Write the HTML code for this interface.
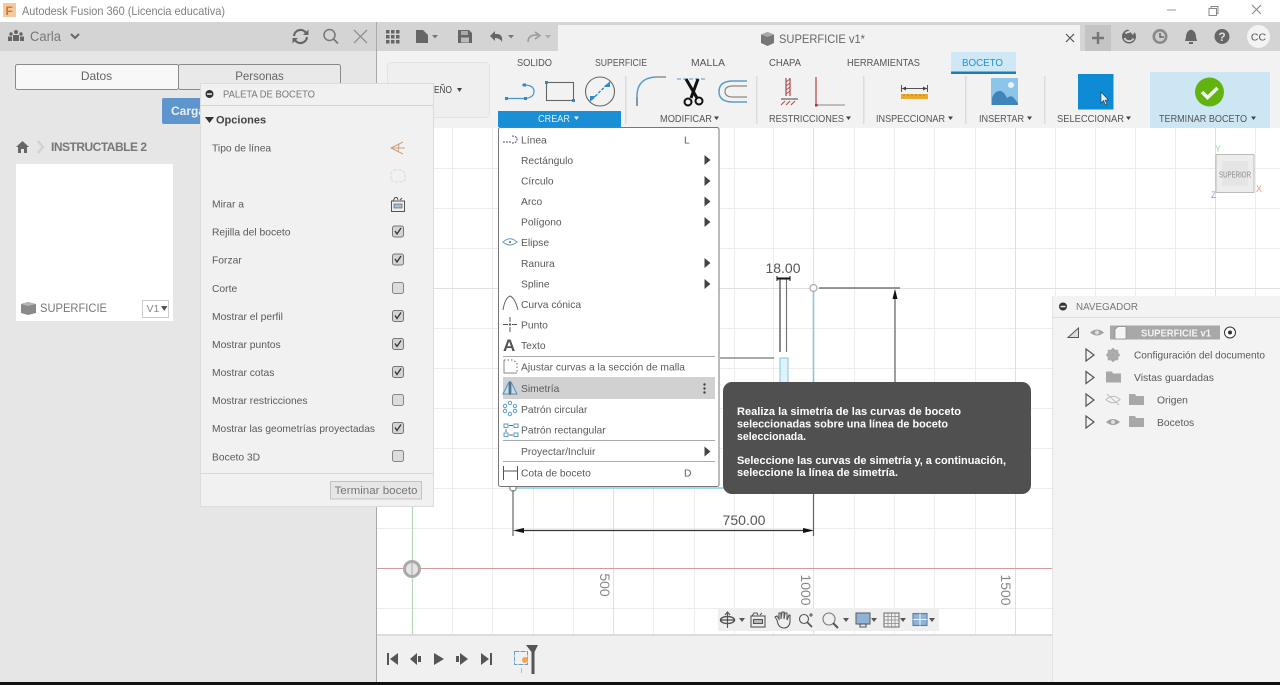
<!DOCTYPE html>
<html lang="es"><head><meta charset="utf-8"><title>Autodesk Fusion 360</title>
<style>
html,body{margin:0;padding:0;width:1280px;height:685px;overflow:hidden;background:#f3f3f3}
svg{display:block;position:absolute;left:0;top:0;filter:blur(.3px)}
text{font-family:"Liberation Sans",sans-serif;font-size:10.5px;fill:#5a5a5a}
.rb{font-size:10.5px;fill:#555}
.m{font-size:10.3px;fill:#5a5a5a}
.p{font-size:10.3px;fill:#5a5a5a}
.tt{font-size:11px;font-weight:bold;fill:#fff}
.g{stroke:#ededed;stroke-width:1}
.G{stroke:#e0e0e0;stroke-width:1}
</style></head><body>
<svg width="1280" height="685" viewBox="0 0 1280 685" xmlns="http://www.w3.org/2000/svg">
<defs>
<g id="chk"><rect x="-5.5" y="-5.5" width="11" height="11" rx="2" fill="#d4d4d4" stroke="#777"/><path d="M-3-.5 -1 2.5 3-3.5" fill="none" stroke="#333" stroke-width="1.3"/></g>
<g id="unc"><rect x="-5.5" y="-5.5" width="11" height="11" rx="2" fill="#dcdcdc" stroke="#888"/></g>
<path id="ar" d="M0-5 6 0 0 5Z" fill="#444"/>
<g id="fold"><path d="M0 0H6L7 2H15V11H0Z" fill="#a8a8a8"/></g>
<g id="eye"><path d="M-7 0Q0-6 7 0 0 6-7 0Z" fill="#a2a2a2"/><circle r="2" fill="#ddd"/></g>
<path id="tri" d="M0 0 8 6 0 12Z" fill="none" stroke="#555" stroke-width="1.2"/>
</defs>

<!-- base -->
<rect width="1280" height="685" fill="#f3f3f3"/>
<rect width="1280" height="22" fill="#fff"/>
<rect y="22" width="1280" height="29" fill="#d4d4d4"/>

<!-- title bar -->
<rect x="3" y="3" width="13" height="14" fill="#f2c9a0"/>
<text x="5.500" y="15" style="font-size:12px;font-weight:bold;fill:#d9722b">F</text>
<text x="22" y="15" style="font-size:12px;fill:#808080" textLength="203" lengthAdjust="spacingAndGlyphs">Autodesk Fusion 360 (Licencia educativa)</text>
<path d="M1167 10H1176" stroke="#999"/>
<path d="M1209 8.500H1216.500V15.500H1209ZM1211 8.500V6.500H1218V13.500H1216.500" fill="none" stroke="#888"/>
<path d="M1252 5 1261 14M1261 5 1252 14" stroke="#888" stroke-width="1.1"/>

<!-- left panel -->
<rect y="51" width="376" height="634" fill="#e6e6e6"/>
<rect x="376" y="22" width="1" height="663" fill="#a9a9a9"/>
<g fill="#666"><circle cx="16" cy="32" r="2"/><circle cx="11" cy="34" r="1.700"/><circle cx="21" cy="34" r="1.700"/><rect x="13" y="35" width="6" height="6"/><rect x="8" y="36.500" width="4" height="4.500"/><rect x="20" y="36.500" width="4" height="4.500"/></g>
<text x="30" y="41" style="font-size:14px;fill:#777" textLength="31" lengthAdjust="spacingAndGlyphs">Carla</text>
<path d="M71 34 75 38 79 34" fill="none" stroke="#666" stroke-width="2"/>
<path d="M294 36A6.500 6.500 0 0 1 306 33M307 37A6.500 6.500 0 0 1 295 40" fill="none" stroke="#666" stroke-width="2.200"/><path d="M303 35H308.500V29.500ZM298 38H292.500V43.500Z" fill="#666"/>
<circle cx="329.500" cy="35" r="5.500" fill="none" stroke="#777" stroke-width="1.500"/><path d="M333.500 39 338 43.500" stroke="#777" stroke-width="1.700"/>
<path d="M354 30 367 43M367 30 354 43" stroke="#888" stroke-width="1.200"/>
<rect x="15.500" y="64.500" width="163" height="25" rx="2" fill="#f8f8f8" stroke="#8a8a8a"/>
<rect x="178.500" y="64.500" width="162" height="25" rx="2" fill="#e9e9e9" stroke="#8a8a8a"/>
<text x="96.500" y="80" text-anchor="middle" style="font-size:12px;fill:#666">Datos</text>
<text x="259.500" y="80" text-anchor="middle" style="font-size:11.500px;fill:#666">Personas</text>
<rect x="162" y="98" width="60" height="26" rx="2" fill="#5f95cd"/>
<text x="171" y="115" style="font-size:12px;font-weight:bold;fill:#e8f0f8">Cargar</text>
<path d="M22.500 141 16 147H18V153H21V149H24V153H27V147H29Z" fill="#666"/>
<path d="M38 141 43 147 38 153" fill="none" stroke="#d2d2d2" stroke-width="2.500"/>
<text x="51" y="151" style="font-size:12px;font-weight:bold;fill:#777" textLength="96" lengthAdjust="spacing">INSTRUCTABLE 2</text>
<rect x="16" y="164" width="157" height="157" fill="#fff"/>
<path d="M21 304 28 302 36 304V313L28 315 21 313Z" fill="#8a8a8a"/><path d="M21 304 28 306 36 304 28 302Z" fill="#b5b5b5"/>
<text x="40" y="312" style="font-size:12px;fill:#777" textLength="67" lengthAdjust="spacingAndGlyphs">SUPERFICIE</text>
<rect x="142.500" y="300.500" width="26" height="17" fill="#fff" stroke="#ccc"/>
<text x="146.500" y="312" style="font-size:10.500px;fill:#888">V1</text><path d="M161 306H167.500L164.200 311Z" fill="#555"/>

<!-- ribbon -->
<rect x="377" y="51" width="903" height="77" fill="#f2f2f2"/>
<rect x="558" y="25" width="522" height="26" fill="#f2f2f2"/>
<rect x="377" y="22" width="903" height="3" fill="#d4d4d4"/>
<g fill="#666"><rect x="386" y="30" width="3.500" height="3.500"/><rect x="391" y="30" width="3.500" height="3.500"/><rect x="396" y="30" width="3.500" height="3.500"/><rect x="386" y="35" width="3.500" height="3.500"/><rect x="391" y="35" width="3.500" height="3.500"/><rect x="396" y="35" width="3.500" height="3.500"/><rect x="386" y="40" width="3.500" height="3.500"/><rect x="391" y="40" width="3.500" height="3.500"/><rect x="396" y="40" width="3.500" height="3.500"/></g>
<path d="M416 30H423L428 35V43H416Z" fill="#666"/><path d="M432 35H438L435 38.500Z" fill="#777"/>
<path d="M458 30H469L472 33V43H458Z" fill="#666"/><rect x="461" y="31" width="7" height="4" fill="#aaa"/><rect x="461" y="37.500" width="8" height="5" fill="#bbb"/>
<path d="M490 36 495 31V34H498Q503 35 502 42Q500 38 495 38V41Z" fill="#666"/><path d="M508 35H514L511 38.500Z" fill="#777"/>
<path d="M528 42Q528 35 536 35H538M535 32 540 35.500 535 39" fill="none" stroke="#999" stroke-width="1.500"/><path d="M545 35H551L548 38.500Z" fill="#aaa"/>
<path d="M761 34.500 767.500 32 774 34.500V43L767.500 46 761 43Z" fill="#777"/><path d="M761 34.500 767.500 37 774 34.500 767.500 32Z" fill="#aaa"/>
<text x="779" y="43" style="font-size:12px;fill:#666" textLength="86" lengthAdjust="spacingAndGlyphs">SUPERFICIE v1*</text>
<path d="M1066 34 1074 42M1074 34 1066 42" stroke="#555" stroke-width="1.200"/>
<rect x="1085" y="25" width="26" height="26" fill="#c4c4c4"/>
<path d="M1098 32V44M1092 38H1104" stroke="#777" stroke-width="2.500"/>
<circle cx="1129" cy="36.500" r="7" fill="#666"/><path d="M1124.500 38A5 5 0 0 0 1133.500 38.500M1125.500 33.500A5 5 0 0 1 1130 32" fill="none" stroke="#d4d4d4" stroke-width="1.800"/><path d="M1128 29.500 1136 29.500 1133 35Z" fill="#d4d4d4"/>
<circle cx="1160" cy="36.500" r="7.500" fill="#888"/><circle cx="1160" cy="36.500" r="5" fill="#ccc"/><path d="M1160 33V37H1164" fill="none" stroke="#555" stroke-width="1.300"/>
<path d="M1191 29.500Q1186 31 1186 37L1185 41H1197L1196 37Q1196 31 1191 29.500Z" fill="#666"/><rect x="1189" y="42" width="4" height="2" fill="#666"/>
<circle cx="1222" cy="36.500" r="7.500" fill="#666"/><text x="1222" y="41" text-anchor="middle" style="font-size:12px;font-weight:bold;fill:#ddd">?</text>
<circle cx="1258.500" cy="36.500" r="11.500" fill="#f3f3f3"/><text x="1258.500" y="40.500" text-anchor="middle" style="font-size:10.500px;fill:#555">CC</text>

<!-- design box -->
<rect x="387.500" y="62.500" width="102" height="55" rx="4" fill="#efefef" stroke="#e2e2e2"/>
<text x="434" y="93" class="rb" style="fill:#444" textLength="18" lengthAdjust="spacingAndGlyphs">EÑO</text><path d="M457 88H462L459.500 92Z" fill="#444"/>

<!-- ribbon tabs -->
<text x="517" y="66" class="rb" textLength="35" lengthAdjust="spacingAndGlyphs">SOLIDO</text>
<text x="595" y="66" class="rb" textLength="52" lengthAdjust="spacingAndGlyphs">SUPERFICIE</text>
<text x="691" y="66" class="rb" textLength="34" lengthAdjust="spacingAndGlyphs">MALLA</text>
<text x="769" y="66" class="rb" textLength="32" lengthAdjust="spacingAndGlyphs">CHAPA</text>
<text x="847" y="66" class="rb" textLength="73" lengthAdjust="spacingAndGlyphs">HERRAMIENTAS</text>
<rect x="951" y="52" width="65" height="20" fill="#cfe8f5"/>
<rect x="951" y="71.500" width="65" height="2.500" fill="#1b7db3"/>
<text x="962" y="66" class="rb" style="fill:#2590cc" textLength="41" lengthAdjust="spacingAndGlyphs">BOCETO</text>

<!-- dividers -->
<g fill="#dcdcdc"><rect x="625" y="76" width="1.500" height="48"/><rect x="756" y="76" width="1.500" height="48"/><rect x="863" y="76" width="1.500" height="48"/><rect x="965" y="76" width="1.500" height="48"/><rect x="1044" y="76" width="1.500" height="48"/></g>

<!-- create icons -->
<path d="M506 98.500H524Q534 98 534 91.500T524 85H522" fill="none" stroke="#4c93c6" stroke-width="1.200"/>
<g fill="#2d8ccb"><rect x="505" y="97" width="3" height="3"/><rect x="524" y="97" width="3" height="3"/><rect x="523" y="83.500" width="3" height="3"/></g>
<rect x="546.500" y="82.500" width="27" height="18" fill="none" stroke="#666" stroke-width="1.100"/>
<g fill="#2d8ccb"><rect x="545" y="81" width="3" height="3"/><rect x="572" y="99" width="3" height="3"/></g>
<circle cx="600" cy="91.500" r="14.500" fill="none" stroke="#666" stroke-width="1.100"/>
<path d="M592 99.500 608 83.500" stroke="#2d8ccb" stroke-width="1.400" stroke-dasharray="3 1.500"/>
<path d="M590 102V96H596ZM610 81V87H604Z" fill="#2d8ccb"/>

<!-- modify icons -->
<path d="M637 106V96Q637 78 656 77" fill="none" stroke="#5a9cc9" stroke-width="1.500"/>
<path d="M656 77H666" stroke="#777" stroke-width="1.200"/><path d="M637 97V106" stroke="#777" stroke-width="1.200"/>
<path d="M677 79H706" stroke="#7aa9c9" stroke-width="1.200" stroke-dasharray="4 2"/>
<path d="M686 79 697 98M698 79 691 98" stroke="#111" stroke-width="3"/>
<circle cx="688" cy="102" r="3.500" fill="none" stroke="#111" stroke-width="2"/><circle cx="699" cy="101" r="3.500" fill="none" stroke="#111" stroke-width="2"/>
<path d="M747 81H733Q719 81 719 91.500T733 102H747" fill="none" stroke="#5a9cc9" stroke-width="1.500"/>
<path d="M747 86H733Q725 86 725 91.500T733 97H747" fill="none" stroke="#888" stroke-width="1.200"/>
<text x="660" y="122" class="rb" textLength="52" lengthAdjust="spacingAndGlyphs">MODIFICAR</text><path d="M714 116.500H719L716.500 120Z" fill="#444"/>

<!-- constraint icons -->
<path d="M786 78V96M790 78V96" stroke="#9e3a3a" stroke-width="1.100"/>
<path d="M786 82 790 79M786 86 790 83M786 90 790 87M786 94 790 91" stroke="#c45" stroke-width=".9"/>
<path d="M781 99H798" stroke="#666" stroke-width="1.300"/>
<path d="M781 105 785 101M786 105 790 101M791 105 795 101" stroke="#b44" stroke-width="1"/>
<path d="M816 77V104.500" stroke="#a33" stroke-width="1.100"/><path d="M817 105H845" stroke="#888"/><rect x="815" y="104" width="2.500" height="2.500" fill="#a33"/>
<text x="769" y="122" class="rb" textLength="75" lengthAdjust="spacingAndGlyphs">RESTRICCIONES</text><path d="M846 116.500H851L848.500 120Z" fill="#444"/>

<!-- inspect -->
<path d="M901.500 85V92M927.500 85V92M902 88.500H927" stroke="#555" stroke-width="1"/>
<path d="M902 88.500 906 86.500V90.500ZM927 88.500 923 86.500V90.500Z" fill="#444"/>
<rect x="901" y="94" width="27" height="5" fill="#eba92d"/>
<path d="M904 94.500V96M908 94.500V96M912 94.500V96M916 94.500V96M920 94.500V96M924 94.500V96" stroke="#8a6a20" stroke-width=".7"/>
<text x="876" y="122" class="rb" textLength="69" lengthAdjust="spacingAndGlyphs">INSPECCIONAR</text><path d="M948 116.500H953L950.500 120Z" fill="#444"/>

<!-- insert -->
<rect x="991" y="78" width="27" height="27" fill="#8cc4ea"/>
<circle cx="1011" cy="85" r="3" fill="#e8f3fa"/>
<path d="M992 105V98Q995 90 1001 91 1004 92 1007 98 1010 95 1013 97L1018 103V105Z" fill="#3f85ba"/>
<text x="979" y="122" class="rb" textLength="45" lengthAdjust="spacingAndGlyphs">INSERTAR</text><path d="M1027 116.500H1032L1029.500 120Z" fill="#444"/>

<!-- select -->
<rect x="1078" y="74" width="35.500" height="35.500" fill="#0f8ad4"/>
<path d="M1101 92 1101 103 1103.500 100.500 1105.500 105 1107 104.300 1105 100H1108.500Z" fill="#f2f2f2" stroke="#333" stroke-width=".6"/>
<text x="1057" y="122" class="rb" textLength="67" lengthAdjust="spacingAndGlyphs">SELECCIONAR</text><path d="M1126 116.500H1131L1128.500 120Z" fill="#444"/>

<!-- finish -->
<rect x="1150" y="72" width="120" height="56" fill="#cde6f3"/>
<circle cx="1209.500" cy="92" r="14.500" fill="#61b30f"/>
<path d="M1202 92 1207.500 97.500 1217.500 88" fill="none" stroke="#f2f7e8" stroke-width="3.500"/>
<text x="1159" y="122" class="rb" textLength="88" lengthAdjust="spacingAndGlyphs">TERMINAR BOCETO</text><path d="M1251 116.500H1256L1253.500 120Z" fill="#444"/>

<!-- canvas -->
<rect x="377" y="128" width="903" height="507" fill="#fff"/>
<g class="g">
<path d="M452.500 128V635M492.500 128V635M533.500 128V635M573.500 128V635M653.500 128V635M694.500 128V635M734.500 128V635M773.500 128V635M854.500 128V635M894.500 128V635M934.500 128V635M975.500 128V635M1055.500 128V296M1095.500 128V296M1135.500 128V296M1175.500 128V296M1255.500 128V296"/>
<path d="M377 168.500H1280M377 208.500H1280M377 248.500H1280M377 328.500H1052M377 368.500H1052M377 408.500H1052M377 448.500H1052M377 488.500H1052M377 528.500H1052M377 608.500H1052"/>
</g>
<g class="G"><path d="M613.500 128V635M813.500 128V635M1015.500 128V635M1215.500 128V296M377 288.500H1280"/></g>
<path d="M412.500 506V635" stroke="#b4d8b4" stroke-width="1.200"/>
<path d="M377 568.500H1052" stroke="#d79a9a" stroke-width="1"/>
<circle cx="412" cy="569" r="7.500" fill="#e4e4e4" stroke="#aaa" stroke-width="3"/><path d="M412 561V577" stroke="#aaa"/>

<!-- sketch -->
<path d="M813.500 290V382" stroke="#86c3de" stroke-width="1.500"/>
<rect x="780" y="358" width="8" height="30" fill="#dff3fb" stroke="#86c3de" stroke-width="1"/>
<path d="M513 488H813" stroke="#8fd0e6" stroke-width="1.500"/>
<circle cx="813.500" cy="288" r="3.500" fill="#fff" stroke="#aaa" stroke-width="1.200"/>
<circle cx="513" cy="488" r="3.200" fill="#fff" stroke="#888" stroke-width="1.200"/>
<path d="M780 278V352" stroke="#777" stroke-width="1.700"/><path d="M786.500 278V352" stroke="#777" stroke-width="1.200"/>
<path d="M777 278.500H790" stroke="#111" stroke-width="2"/><path d="M777 276V281M790 276V281" stroke="#111"/>
<text x="783" y="273" text-anchor="middle" style="font-size:14px;fill:#555" textLength="35" lengthAdjust="spacingAndGlyphs">18.00</text>
<path d="M720 358H774" stroke="#777" stroke-width="1.200"/>
<path d="M819 288H900" stroke="#777" stroke-width="1.400"/>
<path d="M895 295V382" stroke="#777" stroke-width="1.400"/><path d="M895 289 892.500 299H897.500Z" fill="#111"/>
<path d="M513 490V536M813.500 494V536" stroke="#666" stroke-width="1.200"/>
<path d="M520 530.500H806" stroke="#333" stroke-width="1.300"/>
<path d="M513 530.500 524 528V533ZM814 530.500 803 528V533Z" fill="#111"/>
<text x="744" y="525" text-anchor="middle" style="font-size:14px;fill:#555" textLength="43" lengthAdjust="spacingAndGlyphs">750.00</text>
<text transform="translate(600 585) rotate(90)" text-anchor="middle" style="font-size:14px;fill:#888">500</text>
<text transform="translate(801 590) rotate(90)" text-anchor="middle" style="font-size:14px;fill:#888">1000</text>
<text transform="translate(1001 590) rotate(90)" text-anchor="middle" style="font-size:14px;fill:#888">1500</text>

<!-- viewcube -->
<rect x="1216" y="154.500" width="38" height="38" fill="#ededed" stroke="#bbb"/>
<rect x="1222" y="161" width="26" height="25" fill="#e5e5e5"/>
<text x="1235" y="177.500" text-anchor="middle" style="font-size:8.500px;fill:#888" textLength="32" lengthAdjust="spacingAndGlyphs">SUPERIOR</text>
<text x="1215" y="152" style="font-size:9px;fill:#9fd79f">Y</text>
<text x="1256" y="192" style="font-size:9px;fill:#f08a8a">X</text>
<text x="1211" y="198" style="font-size:9px;fill:#8f8fe0">Z</text>
<path d="M1215.500 155V192L1214 194" stroke="#b3d9b3" fill="none"/>

<!-- bottom toolbar -->
<rect x="718" y="608" width="221" height="23" fill="#efefef"/>
<g fill="none" stroke="#555" stroke-width="1.100">
<path d="M727.500 612V628M725 615 727.500 612 730 615"/><ellipse cx="727.500" cy="620" rx="7" ry="3.500" stroke-width="1.400"/><path d="M720 620H735" stroke="#333"/>
<rect x="751" y="616" width="14" height="11"/><rect x="753.500" y="619.500" width="9" height="4" fill="#bbb"/><path d="M752 616 754 613H757L758 615M760 615 762 613"/>
<path d="M777 620 775 617 777 616 779 619V613H781V619L782 612H784V619L785 613H787V620L789 615H790V622Q789 628 784 628 780 628 778 624Z"/>
<circle cx="804" cy="619" r="4.500"/><path d="M807 622 812 627" stroke-width="1.700"/><path d="M811 613V617M809 615H813"/>
<circle cx="829" cy="619" r="6" stroke="#777"/><path d="M833 623 838 628" stroke-width="2"/>
<rect x="856" y="613" width="14" height="11" fill="#8eb2d8" stroke="#666"/><path d="M860 624H866V627H860Z"/>
<rect x="884" y="613" width="15" height="14" stroke="#777"/><path d="M884 616.500H899M884 620H899M884 623.500H899M888 613V627M891.500 613V627M895 613V627" stroke="#888" stroke-width=".7"/>
<rect x="913" y="613.500" width="14" height="12" fill="#8eb2d8" stroke="#5c7fa6"/><path d="M920 613.500V625.500M913 619.500H927" stroke="#e8f0f8"/>
</g>
<path d="M739 618H745L742 622ZM843 618H849L846 622ZM871 618H877L874 622ZM900 618H906L903 622ZM929 618H935L932 622Z" fill="#555"/>

<!-- timeline -->
<rect x="377" y="635" width="675" height="47" fill="#f0f0f0"/>
<rect x="377" y="634" width="675" height="2" fill="#dcdcdc"/>
<g fill="#555">
<path d="M387 653H389V665H387ZM398 653V665L390 659Z"/>
<path d="M410 659 417 653V665ZM418 656H421V662H418Z"/>
<path d="M434 653 444 659 434 665Z"/>
<path d="M456 656H459V662H456ZM460 653 468 659 460 665Z"/>
<path d="M481 653 489 659 481 665ZM490 653H492V665H490Z"/>
<path d="M526 645H538L534.500 652V674H531.500V652Z"/>
</g>
<rect x="514.500" y="651.500" width="13" height="13" fill="none" stroke="#6e9fc5" stroke-dasharray="5 1"/>
<circle cx="525" cy="660" r="3" fill="#f2a458"/>
<rect x="521" y="668" width="1" height="5" fill="#bbb"/>

<!-- bottom strip -->
<rect y="682" width="1280" height="3" fill="#111"/>

<!-- navigator -->
<rect x="1053" y="296" width="227" height="386" fill="#f3f3f3"/>
<rect x="1052" y="296" width="1" height="386" fill="#e3e3e3"/>
<rect x="1053" y="317" width="227" height="1" fill="#ddd"/>
<circle cx="1063" cy="306.500" r="4" fill="#333"/><rect x="1060.500" y="305.800" width="5" height="1.500" fill="#eee"/>
<text x="1076" y="310" style="font-size:10.500px;fill:#777" textLength="62" lengthAdjust="spacingAndGlyphs">NAVEGADOR</text>
<path d="M1068 337.500 1078.500 328V337.500Z" fill="#ddd" stroke="#555"/>
<use href="#eye" x="1097" y="332.500"/>
<rect x="1110" y="325.500" width="110" height="14" fill="#a8a8a8"/>
<path d="M1115 329.500 1118 326.500H1126V339H1115Z" fill="#f5f5f5" stroke="#888" stroke-width=".7"/>
<text x="1141" y="336.500" style="font-size:10.500px;font-weight:bold;fill:#f3f3f3" textLength="70" lengthAdjust="spacingAndGlyphs">SUPERFICIE v1</text>
<circle cx="1230" cy="332.500" r="5.500" fill="#fff" stroke="#333"/><circle cx="1230" cy="332.500" r="2" fill="#333"/>
<use href="#tri" x="1086" y="349"/>
<use href="#tri" x="1086" y="371.500"/>
<use href="#tri" x="1086" y="394"/>
<use href="#tri" x="1086" y="416"/>
<circle cx="1113" cy="355" r="4.500" fill="none" stroke="#aaa" stroke-width="3"/><path d="M1113 348V362M1106 355H1120M1108 350 1118 360M1118 350 1108 360" stroke="#aaa" stroke-width="1.800"/>
<use href="#fold" x="1106" y="371.500"/>
<text x="1134" y="358.500" class="p" textLength="131" lengthAdjust="spacingAndGlyphs">Configuración del documento</text>
<text x="1134" y="381" class="p" textLength="80" lengthAdjust="spacingAndGlyphs">Vistas guardadas</text>
<path d="M1106 399.500Q1113 393 1120 399.500 1113 406 1106 399.500ZM1107 394 1119 405" fill="none" stroke="#bbb"/>
<use href="#fold" x="1129" y="394"/>
<text x="1157" y="403.500" class="p">Origen</text>
<use href="#eye" x="1113" y="422"/>
<use href="#fold" x="1129" y="416"/>
<text x="1157" y="426" class="p">Bocetos</text>

<!-- palette -->
<rect x="200.500" y="83.500" width="233" height="423" fill="#f1f1f1" stroke="#dcdcdc"/>
<rect x="201" y="105" width="232" height="1" fill="#d4d4d4"/>
<circle cx="209.500" cy="94" r="4" fill="#333"/><rect x="207" y="93.300" width="5" height="1.500" fill="#eee"/>
<text x="223" y="97.500" style="font-size:10px;fill:#777" textLength="92" lengthAdjust="spacingAndGlyphs">PALETA DE BOCETO</text>
<path d="M205 117H214L209.500 123Z" fill="#333"/>
<text x="216" y="123.500" style="font-size:11px;font-weight:bold;fill:#444">Opciones</text>
<text x="212" y="151.500" class="p">Tipo de línea</text>
<text x="212" y="207.500" class="p">Mirar a</text>
<text x="212" y="235.500" class="p">Rejilla del boceto</text>
<text x="212" y="263.500" class="p">Forzar</text>
<text x="212" y="292" class="p">Corte</text>
<text x="212" y="320" class="p">Mostrar el perfil</text>
<text x="212" y="348" class="p">Mostrar puntos</text>
<text x="212" y="376" class="p">Mostrar cotas</text>
<text x="212" y="404" class="p">Mostrar restricciones</text>
<text x="212" y="432" class="p" textLength="163" lengthAdjust="spacingAndGlyphs">Mostrar las geometrías proyectadas</text>
<text x="212" y="460.500" class="p">Boceto 3D</text>
<path d="M403 142 391 148 403 154M399 144 398 152M391 148H405" fill="none" stroke="#c9a27e" stroke-width="1"/>
<path d="M394 170H402L405 173V180L402 182H394L391 180V173Z" fill="none" stroke="#d8d8d8" stroke-dasharray="3 1.500"/>
<rect x="391.500" y="201" width="13" height="10.500" fill="#eee" stroke="#555"/><rect x="394" y="204" width="8" height="4" fill="#a9bdd2" stroke="#555" stroke-width=".6"/><path d="M393 201 395 197.500H397L398 200M400 200 402 198" fill="none" stroke="#555"/>
<use href="#chk" x="398" y="231.500"/>
<use href="#chk" x="398" y="259.500"/>
<use href="#unc" x="398" y="288"/>
<use href="#chk" x="398" y="316"/>
<use href="#chk" x="398" y="344"/>
<use href="#chk" x="398" y="372"/>
<use href="#unc" x="398" y="400"/>
<use href="#chk" x="398" y="428"/>
<use href="#unc" x="398" y="456"/>
<rect x="201" y="473" width="232" height="1" fill="#d8d8d8"/>
<rect x="330.500" y="481.500" width="91" height="17.500" fill="#e6e6e6" stroke="#c2c2c2"/>
<text x="376" y="494" text-anchor="middle" style="font-size:11px;fill:#777" textLength="83" lengthAdjust="spacingAndGlyphs">Terminar boceto</text>

<!-- create menu -->
<rect x="498.500" y="127.500" width="220.500" height="359" rx="2" fill="#fff" stroke="#777"/>
<rect x="498" y="111" width="123" height="16" fill="#1a8fd6"/>
<text x="538" y="122" class="rb" style="fill:#d8eefa" textLength="32" lengthAdjust="spacingAndGlyphs">CREAR</text><path d="M574 116.500H579L576.500 120Z" fill="#e5f3fb"/>
<path d="M503 142H511M512 136Q517 136 517 139.500T512 143" fill="none" stroke="#447" stroke-width="1" stroke-dasharray="2 1"/>
<text x="521" y="143.500" class="m">Línea</text><text x="684" y="143.500" class="m">L</text>
<text x="521" y="164" class="m">Rectángulo</text><use href="#ar" x="704.500" y="160"/>
<text x="521" y="184.500" class="m">Círculo</text><use href="#ar" x="704.500" y="181"/>
<text x="521" y="205" class="m">Arco</text><use href="#ar" x="704.500" y="201.500"/>
<text x="521" y="225.500" class="m">Polígono</text><use href="#ar" x="704.500" y="222"/>
<path d="M503 242Q510 235.500 517 242 510 248 503 242Z" fill="none" stroke="#5a9cc9"/><circle cx="510" cy="242" r=".9" fill="#333"/>
<text x="521" y="246" class="m">Elipse</text>
<text x="521" y="267" class="m">Ranura</text><use href="#ar" x="704.500" y="263"/>
<text x="521" y="287.500" class="m">Spline</text><use href="#ar" x="704.500" y="284"/>
<path d="M503 310Q505 298 510 296 515 298 518 310" fill="none" stroke="#666"/>
<text x="521" y="308" class="m">Curva cónica</text>
<path d="M503 324.500H508M512 324.500H517M510 317V322M510 327V332" stroke="#555"/><circle cx="510" cy="324.500" r="1.200" fill="#555"/>
<text x="521" y="328.500" class="m">Punto</text>
<text x="503" y="351" style="font-size:17px;font-weight:bold;fill:#555">A</text>
<text x="521" y="349" class="m">Texto</text>
<rect x="503" y="356" width="212" height="1" fill="#aaa"/>
<path d="M504 360V373H517" fill="none" stroke="#888"/><path d="M504 360H513L517 363V373" fill="none" stroke="#666" stroke-dasharray="1.500 2"/>
<text x="521" y="370.500" class="m" textLength="164" lengthAdjust="spacingAndGlyphs">Ajustar curvas a la sección de malla</text>
<rect x="503" y="377" width="212" height="22" fill="#d1d1d1"/>
<path d="M509 382 503 394H509ZM511 382V394H517Z" fill="#c9dbe8" stroke="#5a8fb5"/><path d="M510 381V395" stroke="#555"/>
<text x="521" y="392" class="m">Simetría</text>
<g fill="#444"><circle cx="704.500" cy="384.500" r="1.200"/><circle cx="704.500" cy="388.500" r="1.200"/><circle cx="704.500" cy="392.500" r="1.200"/></g>
<g fill="none" stroke="#5a9cc9"><circle cx="510" cy="403" r="1.700"/><circle cx="505" cy="406" r="1.700"/><circle cx="515" cy="406" r="1.700"/><circle cx="505" cy="411" r="1.700"/><circle cx="515" cy="411" r="1.700"/><circle cx="510" cy="414" r="1.700"/></g>
<text x="521" y="413" class="m">Patrón circular</text>
<g fill="none" stroke="#5a9cc9"><rect x="504" y="424" width="4" height="3.500"/><rect x="514" y="424" width="4" height="3.500"/><rect x="504" y="433" width="4" height="3.500"/><rect x="514" y="433" width="4" height="3.500"/></g><path d="M509 425.500H513M506 429V432M509 435H513" stroke="#666"/>
<text x="521" y="433.500" class="m">Patrón rectangular</text>
<rect x="503" y="440" width="212" height="1" fill="#aaa"/>
<text x="521" y="455" class="m">Proyectar/Incluir</text><use href="#ar" x="704.500" y="451.500"/>
<rect x="503" y="461" width="212" height="1" fill="#aaa"/>
<path d="M503.500 466V480M517.500 466V480M504 471H517" fill="none" stroke="#555"/>
<text x="521" y="476.500" class="m">Cota de boceto</text><text x="684" y="476.500" class="m">D</text>

<!-- tooltip -->
<rect x="723" y="382" width="308" height="112" rx="9" fill="#505050"/>
<text x="737" y="415" class="tt" textLength="224" lengthAdjust="spacingAndGlyphs">Realiza la simetría de las curvas de boceto</text>
<text x="737" y="427.500" class="tt" textLength="211" lengthAdjust="spacingAndGlyphs">seleccionadas sobre una línea de boceto</text>
<text x="737" y="440" class="tt" textLength="69" lengthAdjust="spacingAndGlyphs">seleccionada.</text>
<text x="737" y="464" class="tt" textLength="269" lengthAdjust="spacingAndGlyphs">Seleccione las curvas de simetría y, a continuación,</text>
<text x="737" y="476" class="tt" textLength="161" lengthAdjust="spacingAndGlyphs">seleccione la línea de simetría.</text>
</svg>
</body></html>
